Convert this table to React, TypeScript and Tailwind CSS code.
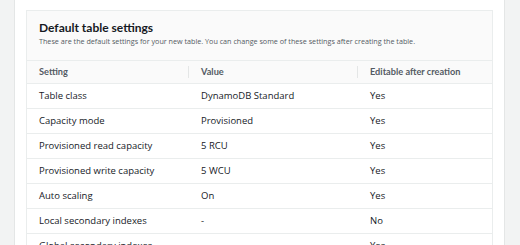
import React from "react";

const rows: [string, string, string][] = [
  ["Table class", "DynamoDB Standard", "Yes"],
  ["Capacity mode", "Provisioned", "Yes"],
  ["Provisioned read capacity", "5 RCU", "Yes"],
  ["Provisioned write capacity", "5 WCU", "Yes"],
  ["Auto scaling", "On", "Yes"],
  ["Local secondary indexes", "-", "No"],
  ["Global secondary indexes", "-", "Yes"],
];

const boldFont = { fontFamily: 'Lato, "Open Sans", sans-serif' };

export default function App() {
  return (
    <div
      className="flex w-[520px] h-[245px] overflow-hidden bg-white text-[#16191f]"
      style={{ fontFamily: '"Open Sans", "Noto Sans", sans-serif' }}
    >
      <div className="w-[15px] shrink-0 bg-[#f2f3f3] border-r border-[#e4e6e6]" />
      <div className="flex-1 px-[11px] pt-[10px]">
        <div className="border border-[#eaeded] bg-white">
          <div className="bg-[#fafafa] px-[12px] pt-[10px] h-[50px] border-b border-[#eaeded]">
            <div className="text-[12px] font-bold leading-[14px]" style={boldFont}>
              Default table settings
            </div>
            <div className="text-[7.2px] leading-[12px] text-[#545b64] whitespace-nowrap">
              These are the default settings for your new table. You can change some of these settings after creating the table.
            </div>
          </div>
          <div
            className="grid grid-cols-[162px_169px_1fr] bg-[#fafafa] h-[23px] items-center text-[9.2px] font-bold text-[#545b64] border-b border-[#eaeded]"
            style={boldFont}
          >
            <div className="pl-[12px] border-r border-[#e4e6e6] h-[12px] leading-[12px]">Setting</div>
            <div className="pl-[12px] border-r border-[#e4e6e6] h-[12px] leading-[12px]">Value</div>
            <div className="pl-[12px] leading-[12px]">Editable after creation</div>
          </div>
          {rows.map((r) => (
            <div
              key={r[0]}
              className="grid grid-cols-[162px_169px_1fr] h-[25px] items-center text-[9.5px] border-b border-[#eaeded]"
            >
              <div className="pl-[12px]">{r[0]}</div>
              <div className="pl-[12px]">{r[1]}</div>
              <div className="pl-[12px]">{r[2]}</div>
            </div>
          ))}
        </div>
      </div>
      <div className="w-[16px] shrink-0 bg-[#f2f3f3] border-l border-[#e4e6e6]" />
    </div>
  );
}
